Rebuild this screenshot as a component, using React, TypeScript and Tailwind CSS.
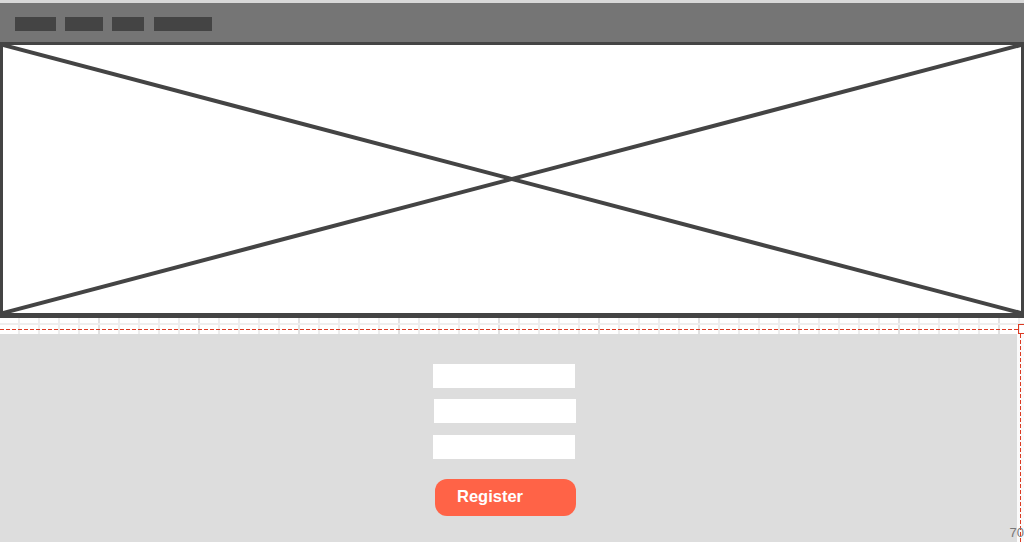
import React from "react";

export default function App() {
  const cells = Array.from({ length: 52 }, (_, i) => i);
  return (
    <div className="relative w-[1024px] h-[542px] overflow-hidden flex flex-col bg-white font-['Liberation_Sans',Arial,sans-serif]">
      <div className="h-[3px] bg-[#d8d8d8]" />
      <header className="h-[39px] bg-[#757575] flex items-start gap-[9px] pl-[15px] pt-[14px]">
        <div className="h-[14px] w-[41px] bg-[#444444]" />
        <div className="h-[14px] w-[38px] bg-[#444444]" />
        <div className="h-[14px] w-[32px] bg-[#444444] mr-[1px]" />
        <div className="h-[14px] w-[58px] bg-[#444444]" />
      </header>
      <div className="h-[276px] border-x-[3px] border-t-[3px] border-b-[5px] border-[#444444] bg-white">
        <svg className="block w-full h-full" viewBox="0 0 1018 268" preserveAspectRatio="none">
          <line x1="0" y1="0" x2="1018" y2="268" stroke="#444444" strokeWidth="4" />
          <line x1="0" y1="268" x2="1018" y2="0" stroke="#444444" strokeWidth="4" />
        </svg>
      </div>
      <div className="relative h-[16px] bg-white">
        <div className="absolute inset-0 flex">
          {cells.map((i) => (
            <div
              key={i}
              className={
                i % 5 === 4
                  ? "h-full w-[20px] shrink-0 border-r-2 border-[#e2e2e2]"
                  : "h-full w-[20px] shrink-0 border-r-2 border-[#eeeeee]"
              }
            />
          ))}
        </div>
        <div className="absolute left-0 right-0 top-[5px] h-[2px] bg-[#eeeeee]" />
        <div className="absolute left-0 w-[1018px] top-[11px] h-[1px] bg-[repeating-linear-gradient(90deg,#dc3a22_0px,#dc3a22_4px,transparent_4px,transparent_6px)]" />
        <div className="absolute left-[1018px] top-[6px] w-[7px] h-[10px] border border-[#dc3a22]" />
      </div>
      <div className="flex flex-1">
        <div className="w-[1017px] bg-[#dddddd] flex flex-col items-start pl-[433px] pt-[30px]">
          <div className="h-[24px] w-[142px] bg-white" />
          <div className="h-[24px] w-[142px] bg-white mt-[11px] ml-[1px]" />
          <div className="h-[24px] w-[142px] bg-white mt-[12px]" />
          <button className="mt-[20px] ml-[2px] h-[37px] w-[141px] rounded-[12px] bg-[#ff6347] text-white text-[16.5px] font-bold text-left pl-[22px] pb-[2px]">
            Register
          </button>
        </div>
        <div className="relative flex-1 bg-[#fbfbfb]">
          <div className="absolute left-[3px] top-0 bottom-0 w-[1px] bg-[repeating-linear-gradient(180deg,#dc3a22_0px,#dc3a22_4px,transparent_4px,transparent_6px)]" />
        </div>
      </div>
      <div className="absolute right-[0px] bottom-[3px] text-[13px] leading-none text-[#777777]">70</div>
    </div>
  );
}
